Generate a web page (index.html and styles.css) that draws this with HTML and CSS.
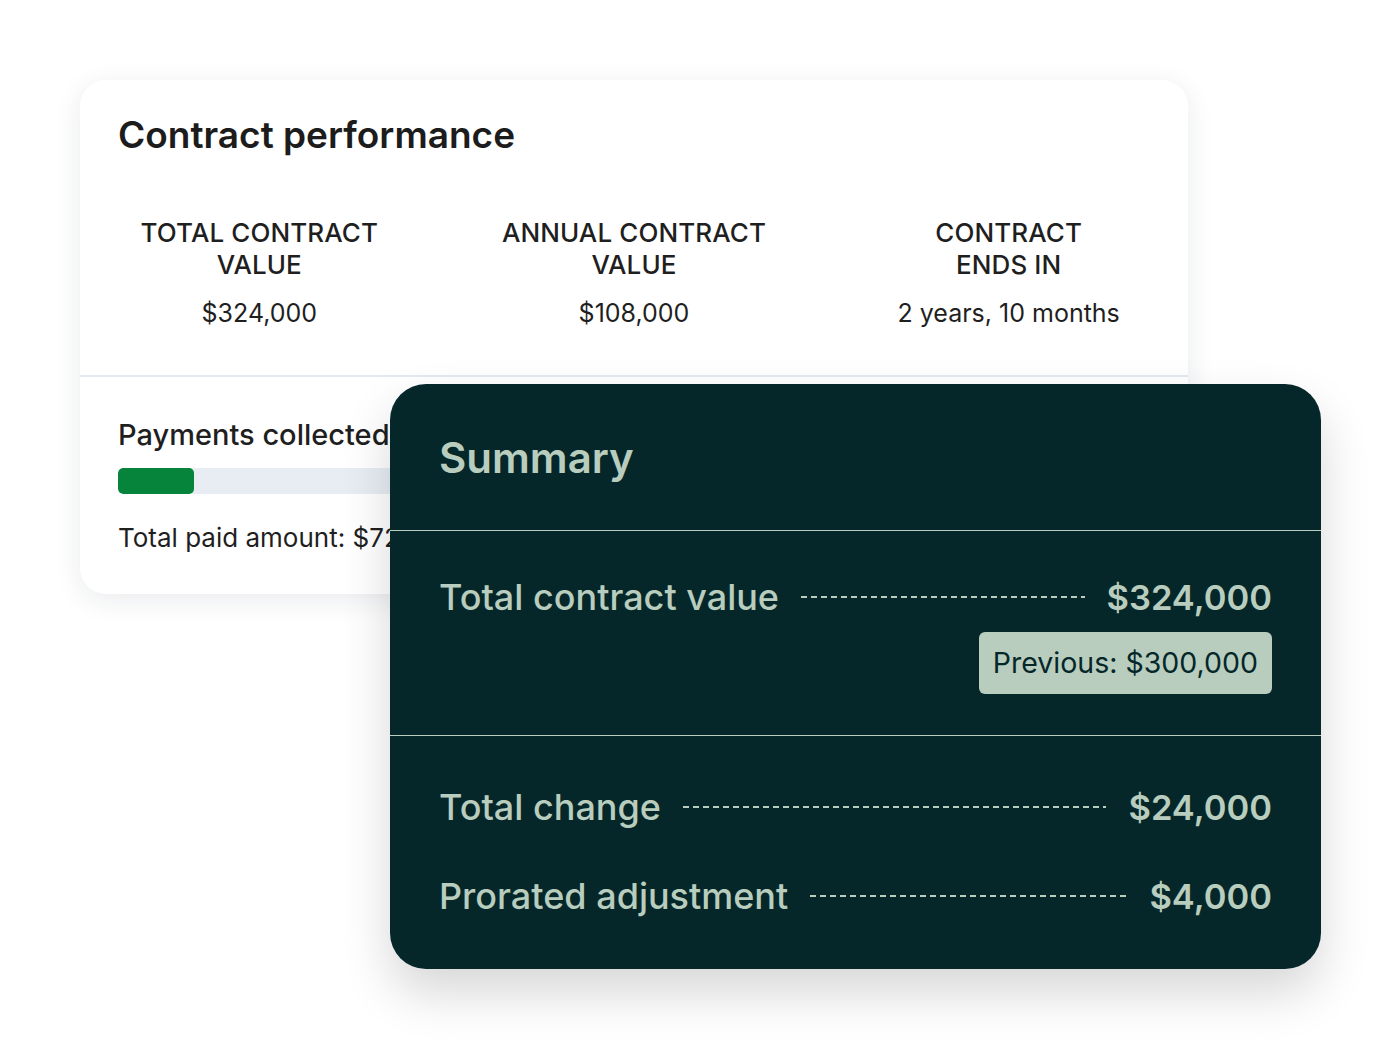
FILE: index.html
```html
<!DOCTYPE html>
<html lang="en">
<head>
    <meta charset="UTF-8">
    <meta name="viewport" content="width=device-width, initial-scale=1.0">
    <title>Contract performance</title>
    <link rel="stylesheet" href="styles.css">
</head>
<body>
    <div class="stage">
        <!-- Contract overview card -->
        <div class="perf-card">
            <h1 class="perf-title">Contract performance</h1>
            <div class="stats">
                <div class="stat">
                    <div class="stat-label">TOTAL CONTRACT<br>VALUE</div>
                    <div class="stat-value">$324,000</div>
                </div>
                <div class="stat">
                    <div class="stat-label">ANNUAL CONTRACT<br>VALUE</div>
                    <div class="stat-value">$108,000</div>
                </div>
                <div class="stat">
                    <div class="stat-label">CONTRACT<br>ENDS IN</div>
                    <div class="stat-value">2 years, 10 months</div>
                </div>
            </div>
            <div class="payments">
                <h2 class="payments-title">Payments collected</h2>
                <div class="progress">
                    <div class="progress-fill" style="width: 7.4%"></div>
                </div>
                <p class="payments-total">Total paid amount: $72,000</p>
            </div>
        </div>

        <!-- Summary panel on top -->
        <div class="summary">
            <div class="summary-head">
                <h2 class="summary-title">Summary</h2>
            </div>
            <div class="summary-block">
                <div class="summary-row">
                    <span class="row-label">Total contract value</span>
                    <span class="row-dots"></span>
                    <span class="row-value">$324,000</span>
                </div>
                <div class="previous">
                    <span class="previous-badge">Previous: $300,000</span>
                </div>
            </div>
            <div class="summary-block summary-block--last">
                <div class="summary-row">
                    <span class="row-label">Total change</span>
                    <span class="row-dots"></span>
                    <span class="row-value">$24,000</span>
                </div>
                <div class="summary-row">
                    <span class="row-label">Prorated adjustment</span>
                    <span class="row-dots"></span>
                    <span class="row-value">$4,000</span>
                </div>
            </div>
        </div>
    </div>
</body>
</html>
```

FILE: styles.css
```css
body {
    margin: 0;
    padding: 0;
    background: #ffffff;
    font-family: Inter, "Open Sans", sans-serif;
    color: #1f1f1f;
}
.stage {
    position: relative;
    min-height: 1050px;
    box-sizing: border-box;
    padding: 80px 0 0 80px;
}

/* Weißer Karten-Block */
.perf-card {
    width: 1108px;
    background: #fff;
    border-radius: 26px;
    box-shadow: 0 6px 28px rgba(20, 30, 50, 0.09);
    overflow: hidden;
}
.perf-title {
    margin: 0;
    padding: 34px 38px 0;
    font-size: 37px;
    line-height: 42px;
    font-weight: 600;
    color: #1c1c1c;
}
.stats {
    display: grid;
    grid-template-columns: repeat(3, 1fr);
    margin: 61px -8px 0;
    padding-bottom: 46px;
    border-bottom: 2px solid #e4e8ef;
}
.stat {
    text-align: center;
}
.stat-label {
    font-size: 26px;
    line-height: 32px;
    font-weight: 500;
    letter-spacing: 0.1px;
}
.stat-value {
    margin-top: 16px;
    font-size: 25px;
    line-height: 32px;
}
.payments {
    padding: 40px 38px 40px;
}
.payments-title {
    margin: 0;
    font-size: 29px;
    line-height: 36px;
    font-weight: 500;
}
.progress {
    margin-top: 15px;
    height: 26px;
    background: #e8edf4;
    border-radius: 5px;
    overflow: hidden;
}
.progress-fill {
    height: 100%;
    background: #06843c;
    border-radius: 5px;
}
.payments-total {
    margin: 28px 0 0;
    font-size: 26px;
    line-height: 32px;
}

/* Dunkles Summary-Panel */
.summary {
    position: absolute;
    left: 390px;
    top: 384px;
    width: 931px;
    background: #05272a;
    color: #b8cdbd;
    border-radius: 36px;
    box-shadow: 0 24px 50px rgba(0, 0, 0, 0.16);
}
.summary-head {
    padding: 50px 49px 48px;
    border-bottom: 1px solid #b8cdbd;
}
.summary-title {
    margin: 0;
    font-size: 42px;
    line-height: 48px;
    font-weight: 600;
}
.summary-block {
    padding: 44px 49px 41px;
    border-bottom: 1px solid #b8cdbd;
}
.summary-block--last {
    padding: 49px 49px 51px;
    border-bottom: none;
    display: flex;
    flex-direction: column;
    gap: 45px;
}
.summary-row {
    display: flex;
    align-items: center;
    height: 44px;
}
.row-label {
    font-size: 36px;
    font-weight: 500;
    white-space: nowrap;
}
.row-dots {
    flex: 1;
    height: 2px;
    margin: 0 22px;
    background: repeating-linear-gradient(90deg, #b8cdbd 0 6px, transparent 6px 10px);
}
.row-value {
    font-size: 34.5px;
    font-weight: 600;
    white-space: nowrap;
}
.previous {
    display: flex;
    justify-content: flex-end;
    margin-top: 13px;
}
.previous-badge {
    background: #b8cdbd;
    color: #05272a;
    font-size: 28.5px;
    line-height: 62px;
    padding: 0 14px;
    border-radius: 6px;
}
```
